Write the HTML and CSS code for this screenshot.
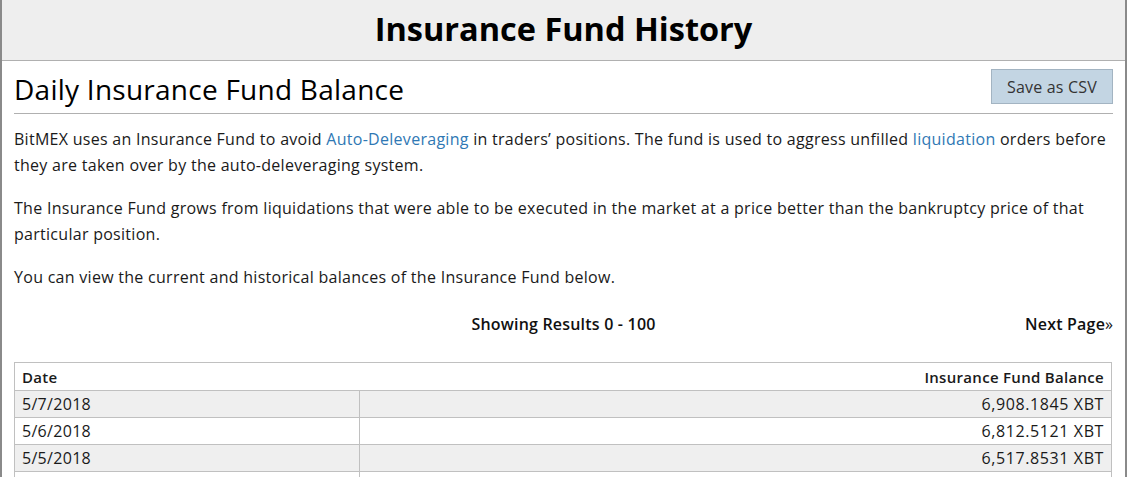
FILE: index.html
```html
<!DOCTYPE html>
<html>
<head>
<meta charset="utf-8">
<link rel="stylesheet" href="styles.css">
</head>
<body>
<div class="panel">
  <div class="panel-head"><h1>Insurance Fund History</h1></div>
  <div class="panel-body">
    <div class="title-row">
      <h2>Daily Insurance Fund Balance</h2>
      <button class="btn">Save as CSV</button>
    </div>
    <p>BitMEX uses an Insurance Fund to avoid <a href="#">Auto-Deleveraging</a> in traders’ positions. The fund is used to aggress unfilled <a href="#">liquidation</a> orders before they are taken over by the auto-deleveraging system.</p>
    <p>The Insurance Fund grows from liquidations that were able to be executed in the market at a price better than the bankruptcy price of that particular position.</p>
    <p>You can view the current and historical balances of the Insurance Fund below.</p>
    <div class="pager">
      <span class="spacer"></span>
      <span class="showing">Showing Results 0 - 100</span>
      <span class="next">Next Page<span class="raquo">»</span></span>
    </div>
    <table class="data">
      <thead>
        <tr><th class="c-date">Date</th><th class="c-bal">Insurance Fund Balance</th></tr>
      </thead>
      <tbody>
        <tr><td class="c-date">5/7/2018</td><td class="c-bal">6,908.1845 XBT</td></tr>
        <tr><td class="c-date">5/6/2018</td><td class="c-bal">6,812.5121 XBT</td></tr>
        <tr><td class="c-date">5/5/2018</td><td class="c-bal">6,517.8531 XBT</td></tr>
        <tr><td class="c-date">5/4/2018</td><td class="c-bal">6,403.2210 XBT</td></tr>
      </tbody>
    </table>
  </div>
</div>
</body>
</html>
```

FILE: styles.css
```css
html, body {
  margin: 0;
  padding: 0;
  background: #fff;
}
body {
  font-family: "Open Sans", "Noto Sans", sans-serif;
  color: #1a1a1a;
  font-size: 16px;
}
.panel {
  width: 1127px;
  box-sizing: border-box;
  border-left: 2px solid #8a8a8a;
  border-right: 2px solid #8a8a8a;
  min-height: 477px;
}
.panel-head {
  height: 60px;
  background: #eeeeee;
  border-bottom: 1px solid #b0b0b0;
  display: flex;
  align-items: center;
  justify-content: center;
}
.panel-head h1 {
  margin: 0;
  font-size: 32.5px;
  font-weight: 700;
  color: #000;
  line-height: 1;
  padding-bottom: 2px;
}
.panel-body {
  padding: 8px 12px 0 12px;
}
.title-row {
  display: flex;
  justify-content: space-between;
  align-items: flex-start;
  border-bottom: 1px solid #b0b0b0;
  padding-bottom: 5px;
}
.title-row h2 {
  margin: 0;
  font-size: 28px;
  letter-spacing: 0.25px;
  font-weight: 400;
  color: #000;
  line-height: 38px;
  padding-top: 1px;
}
.btn {
  font-family: inherit;
  font-size: 16px;
  letter-spacing: 0.2px;
  color: #333;
  background: #c3d5e3;
  border: 1px solid #a3b4c2;
  height: 35px;
  width: 122px;
  padding: 0;
  margin-top: 0;
}
p {
  margin: 12px 0 17px 0;
  line-height: 26px;
  letter-spacing: 0.28px;
}
a {
  color: #2f78b4;
  text-decoration: none;
}
.pager {
  display: flex;
  align-items: center;
  margin-top: 23px;
  font-weight: 600;
  font-size: 16px;
  letter-spacing: 0.2px;
  color: #111;
}
.pager .spacer, .pager .next {
  flex: 1;
}
.pager .next {
  text-align: right;
}
.pager .raquo {
  font-weight: 400;
  letter-spacing: 0;
}
.data {
  margin-top: 27px;
  width: 1098px;
  border-collapse: collapse;
  border: 1px solid #c0c0c0;
  font-size: 16px;
}
.data th, .data td {
  height: 26px;
  padding: 0 7px;
  line-height: 26px;
  color: #1a1a1a;
}
.data th {
  font-weight: 600;
  font-size: 15px;
  letter-spacing: 0.3px;
  height: 27px;
  border-bottom: 1px solid #c0c0c0;
}
.data td {
  border-top: 1px solid #c0c0c0;
  border-right: 1px solid #c0c0c0;
  letter-spacing: 0.3px;
}
.data td.c-bal {
  letter-spacing: 0.6px;
}
.data .c-date {
  text-align: left;
  width: 330px;
}
.data .c-bal {
  text-align: right;
}
.data tbody tr:nth-child(odd) td {
  background: #efefef;
}
```
